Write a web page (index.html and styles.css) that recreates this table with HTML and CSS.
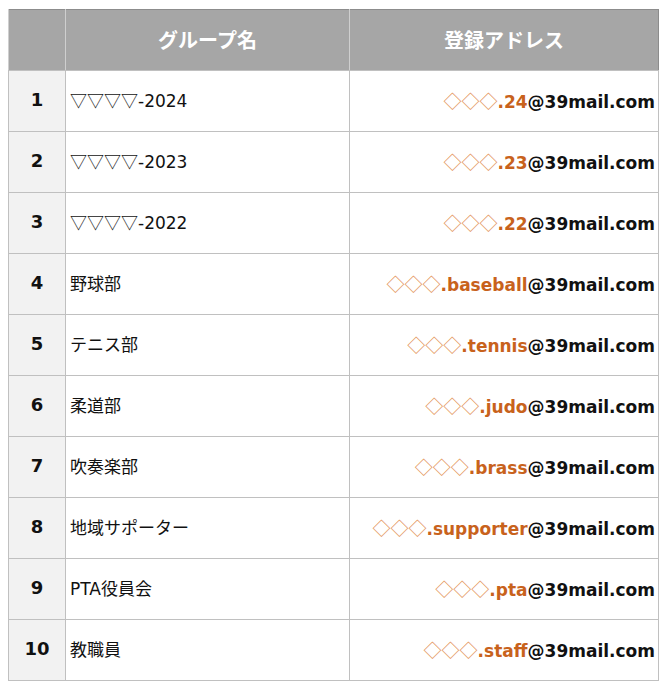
FILE: index.html
```html
<!DOCTYPE html>
<html lang="ja">
<head>
<meta charset="utf-8">
<link rel="stylesheet" href="styles.css">
</head>
<body>
<table class="groups">
  <colgroup>
    <col class="c-num">
    <col class="c-name">
    <col class="c-mail">
  </colgroup>
  <thead>
    <tr><th></th><th>グループ名</th><th>登録アドレス</th></tr>
  </thead>
  <tbody>
    <tr><td class="num">1</td><td class="name"><span class="sym">▽▽▽▽</span>-2024</td><td class="mail"><span class="sym">◇◇◇</span><span class="acc">.24</span>@39mail.com</td></tr>
    <tr><td class="num">2</td><td class="name"><span class="sym">▽▽▽▽</span>-2023</td><td class="mail"><span class="sym">◇◇◇</span><span class="acc">.23</span>@39mail.com</td></tr>
    <tr><td class="num">3</td><td class="name"><span class="sym">▽▽▽▽</span>-2022</td><td class="mail"><span class="sym">◇◇◇</span><span class="acc">.22</span>@39mail.com</td></tr>
    <tr><td class="num">4</td><td class="name">野球部</td><td class="mail"><span class="sym">◇◇◇</span><span class="acc">.baseball</span>@39mail.com</td></tr>
    <tr><td class="num">5</td><td class="name">テニス部</td><td class="mail"><span class="sym">◇◇◇</span><span class="acc">.tennis</span>@39mail.com</td></tr>
    <tr><td class="num">6</td><td class="name">柔道部</td><td class="mail"><span class="sym">◇◇◇</span><span class="acc">.judo</span>@39mail.com</td></tr>
    <tr><td class="num">7</td><td class="name">吹奏楽部</td><td class="mail"><span class="sym">◇◇◇</span><span class="acc">.brass</span>@39mail.com</td></tr>
    <tr><td class="num">8</td><td class="name">地域サポーター</td><td class="mail"><span class="sym">◇◇◇</span><span class="acc">.supporter</span>@39mail.com</td></tr>
    <tr><td class="num">9</td><td class="name">PTA役員会</td><td class="mail"><span class="sym">◇◇◇</span><span class="acc">.pta</span>@39mail.com</td></tr>
    <tr><td class="num">10</td><td class="name">教職員</td><td class="mail"><span class="sym">◇◇◇</span><span class="acc">.staff</span>@39mail.com</td></tr>
  </tbody>
</table>
</body>
</html>
```

FILE: styles.css
```css
html, body {
  margin: 0;
  padding: 0;
  background: #ffffff;
}
body {
  padding: 9px 0 0 8px;
  font-family: "DejaVu Sans", "Noto Sans CJK JP", sans-serif;
  color: #111111;
}
.groups {
  border-collapse: collapse;
  width: 650px;
  table-layout: fixed;
  border: 1px solid #8c8c8c;
}
.c-num { width: 57px; }
.c-name { width: 284px; }
.c-mail { width: 309px; }
.groups th {
  box-sizing: border-box;
  height: 61px;
  padding: 0 0 1px;
  background: #a6a6a6;
  color: #ffffff;
  font-family: "Noto Sans CJK JP", sans-serif;
  font-weight: 700;
  font-size: 20px;
  text-align: center;
  border-left: 1px solid #cfcfcf;
  border-bottom: 1px solid #c0c0c0;
}
.groups td {
  box-sizing: border-box;
  height: 61px;
  padding: 0 0 3px;
  border: 1px solid #c0c0c0;
  vertical-align: middle;
}
.num {
  background: #f2f2f2;
  text-align: center;
  font-weight: 700;
  font-size: 18px;
  color: #111111;
}
.groups td.name {
  padding-left: 4px;
  font-size: 17px;
  font-family: "DejaVu Sans", "Noto Sans CJK JP", sans-serif;
  color: #111111;
}
.name .sym {
  font-family: "Noto Sans CJK JP", sans-serif;
  font-size: 17px;
}
.groups td.mail {
  text-align: right;
  padding-right: 3px;
  font-weight: 700;
  font-size: 17px;
  color: #111111;
  white-space: nowrap;
}
.mail .sym {
  font-family: "Noto Sans CJK JP", sans-serif;
  font-weight: 400;
  color: #e39458;
  font-size: 18px;
}
.acc {
  color: #c8621c;
}
```
